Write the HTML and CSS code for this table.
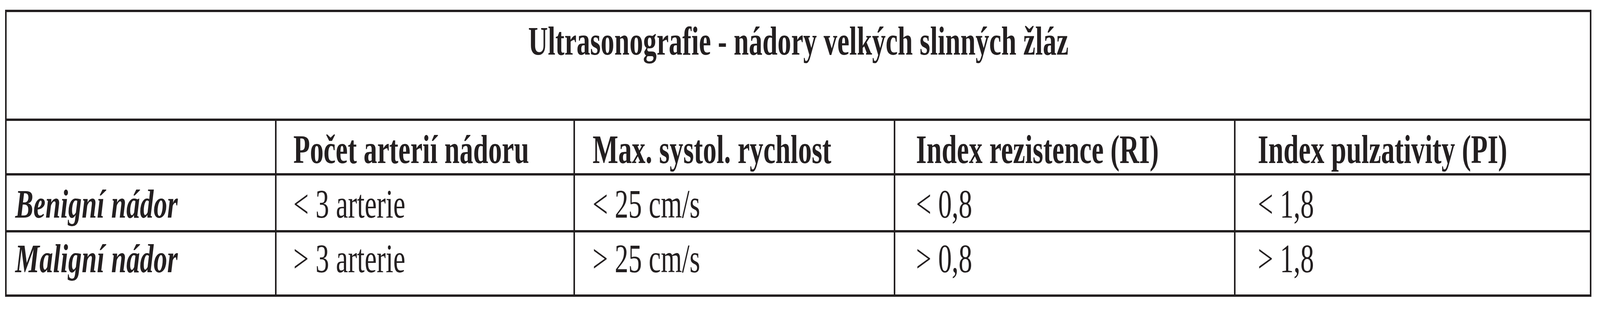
FILE: index.html
```
<!DOCTYPE html>
<html lang="cs">
<head>
<meta charset="utf-8">
<title>Ultrasonografie - nádory velkých slinných žláz</title>
<link rel="stylesheet" href="styles.css">
</head>
<body>
<div class="table">
  <div class="cell title"><span class="txt">Ultrasonografie - nádory velkých slinných žláz</span></div>

  <div class="cell head c1"></div>
  <div class="cell head c2"><span class="txt">Počet arterií nádoru</span></div>
  <div class="cell head c3"><span class="txt">Max. systol. rychlost</span></div>
  <div class="cell head c4"><span class="txt">Index rezistence (RI)</span></div>
  <div class="cell head c5"><span class="txt">Index pulzativity (PI)</span></div>

  <div class="cell label c1"><span class="txt">Benigní nádor</span></div>
  <div class="cell val c2"><span class="txt">&lt; 3 arterie</span></div>
  <div class="cell val c3"><span class="txt">&lt; 25 cm/s</span></div>
  <div class="cell val c4"><span class="txt">&lt; 0,8</span></div>
  <div class="cell val c5"><span class="txt">&lt; 1,8</span></div>

  <div class="cell label last c1"><span class="txt">Maligní nádor</span></div>
  <div class="cell val last c2"><span class="txt">&gt; 3 arterie</span></div>
  <div class="cell val last c3"><span class="txt">&gt; 25 cm/s</span></div>
  <div class="cell val last c4"><span class="txt">&gt; 0,8</span></div>
  <div class="cell val last c5"><span class="txt">&gt; 1,8</span></div>
</div>
</body>
</html>
```
FILE: styles.css
```
html, body {
  margin: 0;
  padding: 0;
  background: #ffffff;
}

body {
  font-family: "Liberation Serif", "Times New Roman", serif;
  color: #231f20;
}

/* Table fitted to the 4096px-wide viewport; the typeset text is
   condensed horizontally (scaleX) like the scanned original. */
.table {
  box-sizing: border-box;
  width: 4061px;
  margin: 25px 0 0 13px;
  padding: 6px 4px;
  background: #231f20;
  display: grid;
  grid-template-columns: 687px 760px 816px 867px 907px;
  grid-template-rows: 273px 134px 140px 159px;
  gap: 6px 4px;
}

.cell {
  background: #ffffff;
  font-size: 103px;
  line-height: 120px;
  padding-top: 13px;
  white-space: nowrap;
  overflow: hidden;
}

.txt {
  display: inline-block;
  transform: scaleX(0.6762);
  transform-origin: 0 0;
}

.title {
  grid-column: 1 / -1;
  text-align: center;
  font-weight: bold;
  padding-top: 14px;
}

.title .txt {
  transform-origin: 50% 0;
}

.head {
  font-weight: bold;
}

.label {
  font-weight: bold;
  font-style: italic;
}

.last {
  padding-top: 7px;
}

.c1 { padding-left: 22px; }
.c2 { padding-left: 43px; }
.c3 { padding-left: 45px; }
.c4 { padding-left: 53px; }
.c5 { padding-left: 57px; }
```
